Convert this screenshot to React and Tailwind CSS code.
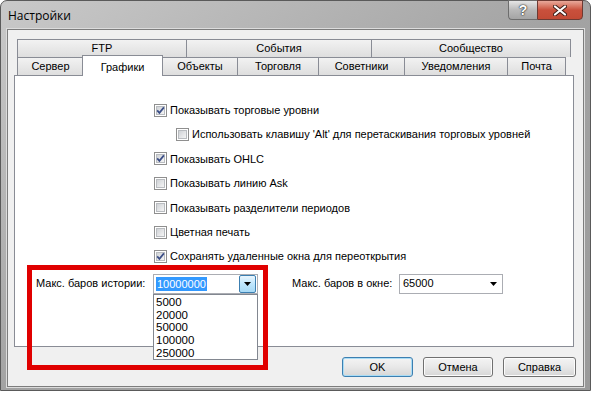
import React from 'react';

const rowOne = [
  { label: 'FTP', w: 'w-[170px]' },
  { label: 'События', w: 'w-[186px]' },
  { label: 'Сообщество', w: 'w-[200px]' },
];

const rowTwo = [
  { label: 'Сервер', w: 'w-[67px]' },
  { label: 'Графики', w: 'w-[81px]', active: true },
  { label: 'Объекты', w: 'w-[76px]' },
  { label: 'Торговля', w: 'w-[82px]' },
  { label: 'Советники', w: 'w-[87px]' },
  { label: 'Уведомления', w: 'w-[104px]' },
  { label: 'Почта', w: 'w-[59px]' },
];

const options = [
  { label: 'Показывать торговые уровни', checked: true },
  { label: "Использовать клавишу 'Alt' для перетаскивания торговых уровней", indent: true },
  { label: 'Показывать OHLC', checked: true },
  { label: 'Показывать линию Ask' },
  { label: 'Показывать разделители периодов' },
  { label: 'Цветная печать' },
  { label: 'Сохранять удаленные окна для переоткрытия', checked: true },
];

const history = ['5000', '20000', '50000', '100000', '250000'];

function Box({ checked }) {
  return (
    <svg width="13" height="13" viewBox="0 0 13 13" className="shrink-0">
      <defs>
        <linearGradient id="boxfill" x1="0" y1="0" x2="1" y2="1">
          <stop offset="0" stopColor="#cdd0d4" />
          <stop offset="1" stopColor="#f7f7f7" />
        </linearGradient>
      </defs>
      <rect x="0.5" y="0.5" width="12" height="12" fill="#fff" stroke="#8f8f8f" />
      <rect x="2.5" y="2.5" width="8" height="8" fill="url(#boxfill)" stroke="#b9bcc0" />
      {checked && (
        <path d="M3.2 6.4 L5.4 8.9 L9.9 3.4" fill="none" stroke="#3a4d86" strokeWidth="1.7" />
      )}
    </svg>
  );
}

function Arrow() {
  return (
    <svg width="7" height="4" viewBox="0 0 7 4">
      <path d="M0 0 H7 L3.5 4 Z" fill="#000" />
    </svg>
  );
}

function Button({ children, primary, w }) {
  return (
    <div
      className={`${w} h-[20px] rounded-[3px] border flex items-center justify-center bg-gradient-to-b from-[#f4f4f4] via-[#e8e8e8] to-[#d6d6d6] ${
        primary ? 'border-[#3c7fb1] shadow-[inset_0_0_0_1px_#a9dcf5]' : 'border-[#707070] shadow-[inset_0_0_0_1px_#fcfcfc]'
      }`}
    >
      {children}
    </div>
  );
}

export default function App() {
  return (
    <div className="relative w-[591px] h-[394px] overflow-hidden bg-white text-[11px] text-black font-['Liberation_Sans',Arial,sans-serif]">
      {/* Window frame */}
      <div className="h-[391px] flex flex-col rounded-t-[7px] border border-[#5a5a5a] bg-gradient-to-br from-[#c9c9c9] via-[#a3a3a3] to-[#9a9a9a]">
        {/* Title bar */}
        <div className="h-[28px] flex items-start shrink-0">
          <div className="pl-[7px] pt-[7px] text-[12px] font-['Open_Sans',sans-serif] leading-[16px]">Настройки</div>
          <div className="ml-auto mr-[7px] flex -mt-px">
            <div className="w-[29px] h-[20px] rounded-bl-[4px] border border-[#6d6d6d] border-r-0 bg-gradient-to-b from-[#e6e6e6] via-[#b9b9b9] to-[#a4a4a4] flex items-center justify-center text-white text-[14px] font-bold [text-shadow:0_0_2px_#222,0_0_1px_#000]">
              ?
            </div>
            <div className="w-[46px] h-[20px] rounded-br-[4px] border border-[#6d3a33] bg-gradient-to-b from-[#e8a99b] via-[#c9503c] to-[#c24a35] flex items-center justify-center">
              <svg width="14" height="11" viewBox="0 0 14 11">
                <path d="M2 1.5 L12 9.5 M12 1.5 L2 9.5" stroke="#3d1d18" strokeWidth="4" strokeLinecap="round" />
                <path d="M2 1.5 L12 9.5 M12 1.5 L2 9.5" stroke="#fff" strokeWidth="2.2" strokeLinecap="round" />
              </svg>
            </div>
          </div>
        </div>

        {/* Client area */}
        <div className="mx-[6px] h-[358px] border border-[#7d7d7d] bg-[#f0f0f0] shadow-[0_0_0_1px_#dcdcdc]">
          <div className="ml-[6px] mt-[9px] w-[560px]">
            {/* Tab rows */}
            <div className="ml-[3px] flex h-[18px]">
              {rowOne.map((t) => (
                <div
                  key={t.label}
                  className={`${t.w} h-[18px] -mr-px last:mr-0 border border-b-0 border-[#898c95] bg-gradient-to-b from-[#f2f2f2] to-[#dedede] flex items-center justify-center`}
                >
                  {t.label}
                </div>
              ))}
            </div>
            <div className="ml-[3px] flex items-end h-[20px] -mt-[2px] relative z-10">
              {rowTwo.map((t) =>
                t.active ? (
                  <div
                    key={t.label}
                    className={`${t.w} h-[21px] -mb-px -mx-px border border-b-0 border-[#898c95] bg-white flex items-start justify-center pt-[3px] relative z-10`}
                  >
                    {t.label}
                  </div>
                ) : (
                  <div
                    key={t.label}
                    className={`${t.w} h-[18px] border-l border-t border-r border-[#898c95] -mr-px last:mr-0 bg-gradient-to-b from-[#f2f2f2] to-[#dedede] flex items-center justify-center`}
                  >
                    {t.label}
                  </div>
                )
              )}
            </div>

            {/* Tab panel */}
            <div className="h-[272px] border border-[#898c95] bg-white pt-[22px]">
              <div className="pl-[139px] flex flex-col">
                {options.map((o) => (
                  <div key={o.label} className={`h-[24.4px] flex items-center gap-[3px] ${o.indent ? 'pl-[22px]' : ''}`}>
                    <Box checked={o.checked} />
                    <span className="whitespace-nowrap">{o.label}</span>
                  </div>
                ))}
              </div>

              <div className="mt-[5px] pl-[21px] flex items-center">
                <div className="w-[117px]">Макс. баров истории:</div>
                <div className="relative w-[105px] h-[20px] border border-[#abadb3] bg-white flex items-center">
                  <span className="ml-[2px] px-[1px] bg-[#3399ff] text-white leading-[14px]">10000000</span>
                  <div className="ml-auto mr-px w-[17px] h-[18px] rounded-[2px] border border-[#3c7fb1] bg-gradient-to-b from-[#eaf6fd] via-[#bee6fd] to-[#a7d9f5] flex items-center justify-center">
                    <Arrow />
                  </div>
                  <div className="absolute left-[-1px] top-[19px] w-[105px] h-[66px] border border-[#828790] bg-white z-30 pt-px pl-[2px] flex flex-col">
                    {history.map((h) => (
                      <div key={h} className="h-[12.8px] leading-[13px] text-[11.5px]">{h}</div>
                    ))}
                  </div>
                </div>

                <div className="ml-[34px] w-[107px]">Макс. баров в окне:</div>
                <div className="w-[104px] h-[20px] border border-[#abadb3] bg-white flex items-center pl-[3px] pr-[5px]">
                  <span>65000</span>
                  <span className="ml-auto flex"><Arrow /></span>
                </div>
              </div>
            </div>

            {/* Dialog buttons */}
            <div className="mt-[10px] flex justify-end gap-[10px] -mr-[2px]">
              <Button primary w="w-[71px]">OK</Button>
              <Button w="w-[70px]">Отмена</Button>
              <Button w="w-[73px]">Справка</Button>
            </div>
          </div>
        </div>
      </div>

      {/* Red highlight annotation */}
      <div className="absolute left-[27px] top-[265px] w-[241px] h-[105px] border-[5px] border-[#e00000] z-40 pointer-events-none" />
    </div>
  );
}
